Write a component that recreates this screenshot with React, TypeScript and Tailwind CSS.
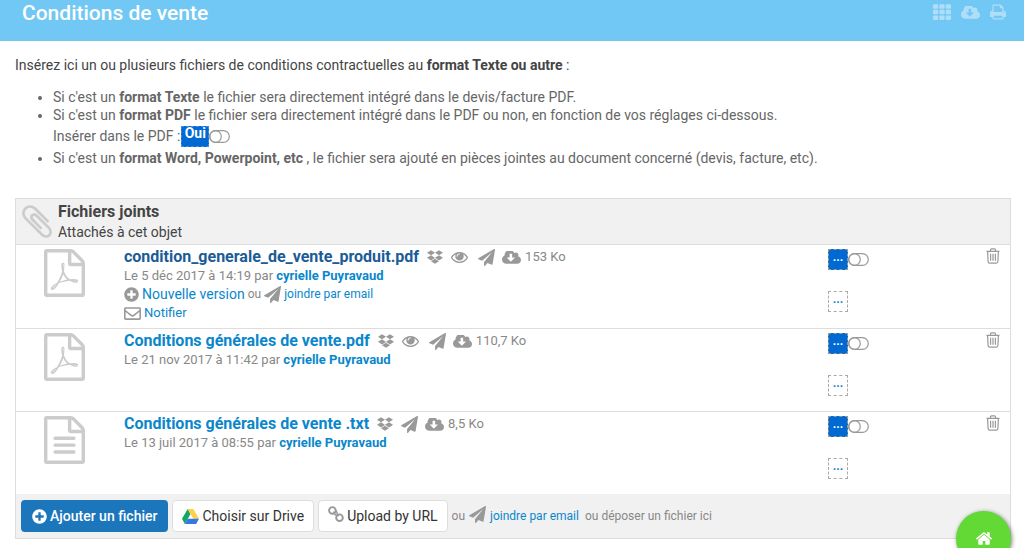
import React, { useState } from 'react';
import { FaDropbox, FaPlusCircle, FaRegEnvelope, FaTh } from 'react-icons/fa';

interface IconProps {
  className?: string;
}

interface JoinedFile {
  id: number;
  name: string;
  type: 'pdf' | 'txt';
  date: string;
  author: string;
  size: string;
  visited?: boolean;
  versions?: boolean;
}

const files: JoinedFile[] = [
  {
    id: 1,
    name: 'condition_generale_de_vente_produit.pdf',
    type: 'pdf',
    date: '5 déc 2017 à 14:19',
    author: 'cyrielle Puyravaud',
    size: '153 Ko',
    visited: true,
    versions: true,
  },
  {
    id: 2,
    name: 'Conditions générales de vente.pdf',
    type: 'pdf',
    date: '21 nov 2017 à 11:42',
    author: 'cyrielle Puyravaud',
    size: '110,7 Ko',
  },
  {
    id: 3,
    name: 'Conditions générales de vente .txt',
    type: 'txt',
    date: '13 juil 2017 à 08:55',
    author: 'cyrielle Puyravaud',
    size: '8,5 Ko',
  },
];

function PaperclipIcon({ className }: IconProps) {
  return (
    <svg viewBox="196 132 1400 1528" fill="currentColor" className={className} aria-hidden="true">
      <path d="M1596 1385q0 117-79 196t-196 79q-135 0-235-100l-777-776q-113-115-113-271 0-159 110-270t269-111q158 0 273 113l605 606q10 10 10 22 0 16-30.5 46.5t-46.5 30.5q-13 0-23-10l-606-607q-79-77-181-77-106 0-179 75t-73 181q0 105 76 181l776 777q63 63 145 63 64 0 106-42t42-106q0-82-63-145l-581-581q-26-24-60-24-29 0-48 19t-19 48q0 32 25 59l410 410q10 10 10 22 0 16-31 47t-47 31q-12 0-22-10l-410-410q-63-61-63-149 0-82 57-139t139-57q88 0 149 63l581 581q100 98 100 235z" />
    </svg>
  );
}

function PrintIcon({ className }: IconProps) {
  return (
    <svg viewBox="64 64 1664 1664" fill="currentColor" className={className} aria-hidden="true">
      <path d="M448 1536h896v-256h-896v256zm0-640h896v-384h-160q-40 0-68-28t-28-68v-160h-640v640zm1152 64q0-26-19-45t-45-19-45 19-19 45 19 45 45 19 45-19 19-45zm128 0v416q0 13-9.5 22.5t-22.5 9.5h-224v160q0 40-28 68t-68 28h-960q-40 0-68-28t-28-68v-160h-224q-13 0-22.5-9.5t-9.5-22.5v-416q0-79 56.5-135.5t135.5-56.5h64v-544q0-40 28-68t68-28h672q40 0 88 20t76 48l152 152q28 28 48 76t20 88v256h64q79 0 135.5 56.5t56.5 135.5z" />
    </svg>
  );
}

function CloudIcon({ className }: IconProps) {
  return (
    <svg viewBox="-64 256 1920 1280" fill="currentColor" className={className} aria-hidden="true">
      <path d="M1216 928q0-14-9-23t-23-9h-224v-352q0-13-9.5-22.5t-22.5-9.5h-192q-13 0-22.5 9.5t-9.5 22.5v352h-224q-13 0-22.5 9.5t-9.5 22.5q0 14 9 23l352 352q9 9 23 9t23-9l351-351q10-12 10-24zm640 224q0 159-112.5 271.5t-271.5 112.5h-1088q-185 0-316.5-131.5t-131.5-316.5q0-130 70-240t188-165q-2-30-2-43 0-212 150-362t362-150q156 0 285.5 87t188.5 231q71-62 166-62 106 0 181 75t75 181q0 76-41 138 130 31 213.5 135.5t83.5 238.5z" />
    </svg>
  );
}

function EyeIcon({ className }: IconProps) {
  return (
    <svg viewBox="0 384 1792 1152" fill="currentColor" className={className} aria-hidden="true">
      <path d="M1664 960q-152-236-381-353 61 104 61 225 0 185-131.5 316.5t-316.5 131.5-316.5-131.5-131.5-316.5q0-121 61-225-229 117-381 353 133 205 333.5 326.5t434.5 121.5 434.5-121.5 333.5-326.5zm-720-384q0-20-14-34t-34-14q-125 0-214.5 89.5t-89.5 214.5q0 20 14 34t34 14 34-14 14-34q0-86 61-147t147-61q20 0 34-14t14-34zm848 384q0 34-20 69-140 230-376.5 368.5t-499.5 138.5-499.5-139-376.5-368q-20-35-20-69t20-69q140-229 376.5-368t499.5-139 499.5 139 376.5 368q20 35 20 69z" />
    </svg>
  );
}

function PlaneIcon({ className }: IconProps) {
  return (
    <svg viewBox="0 0 1792 1792" fill="currentColor" className={className} aria-hidden="true">
      <path d="M1764 11q33 24 27 64l-256 1536q-5 29-32 45-14 8-31 8-11 0-24-5l-453-185-242 295q-18 23-49 23-13 0-22-4-19-7-30.5-23.5t-11.5-36.5v-349l864-1059-1069 925-395-162q-37-14-40-55-2-40 32-59l1664-960q15-9 32-9 20 0 36 11z" />
    </svg>
  );
}

function FileIcon({ type, className }: IconProps & { type: 'pdf' | 'txt' }) {
  return (
    <svg viewBox="128 0 1536 1792" fill="currentColor" className={className} aria-hidden="true">
      <path d="M1596 380q28 28 48 76t20 88v1152q0 40-28 68t-68 28h-1344q-40 0-68-28t-28-68v-1600q0-40 28-68t68-28h896q40 0 88 20t76 48zm-444-244v376h376q-10-29-22-41l-313-313q-12-12-41-22zm384 1528v-1024h-416q-40 0-68-28t-28-68v-416h-768v1536h1280z" />
      {type === 'pdf' ? (
        <path d="M1022 1071q33 26 84 56 59-7 117-7 147 0 177 49 16 22 2 52 0 1-1 2l-2 2v1q-6 38-71 38-48 0-115-20t-130-53q-221 24-392 83-153 262-242 262-15 0-28-7l-24-12q-1-1-6-5-10-10-6-36 9-40 56-91.5t132-96.5q14-9 23 6 2 2 2 4 52-85 107-197 68-136 104-262-24-82-30.5-159.5t6.5-127.5q11-40 42-40h22q23 0 35 15 18 21 9 68-2 6-4 8 1 3 1 8v30q-2 123-14 192 55 164 146 238zm-576 411q52-24 137-158-51 40-87.5 84t-49.5 74zm398-920q-15 42-2 132 1-7 7-44 0-3 7-43 1-4 4-8-1-1-1-2t-1-2q-1-22-13-36 0 1-1 2v2zm-124 661q135-54 284-81-2-1-13-9.5t-16-13.5q-76-67-127-176-27 86-83 197-30 56-45 83zm646-16q-24-24-140-24 76 28 124 28 14 0 18-1 0-1-2-3z" />
      ) : (
        <path d="M544 832h704M544 1088h704M544 1344h704" stroke="currentColor" strokeWidth="128" strokeLinecap="round" />
      )}
    </svg>
  );
}

function HomeIcon({ className }: IconProps) {
  return (
    <svg viewBox="90 253 1612 1283" fill="currentColor" className={className} aria-hidden="true">
      <path d="M1472 992v480q0 26-19 45t-45 19h-384v-384h-256v384h-384q-26 0-45-19t-19-45v-480q0-1 .5-3t.5-3l575-474 575 474q1 2 1 6zm223-69l-62 74q-8 9-21 11h-3q-13 0-21-7l-692-577-692 577q-12 8-24 7-13-2-21-11l-62-74q-8-10-7-23.5t11-21.5l719-599q32-26 76-26t76 26l244 204v-195q0-14 9-23t23-9h192q14 0 23 9t9 23v408l219 182q10 8 11 21.5t-7 23.5z" />
    </svg>
  );
}

function TrashIcon({ className }: IconProps) {
  return (
    <svg viewBox="0 0 14 16" fill="none" stroke="currentColor" strokeWidth="1.2" className={className} aria-hidden="true">
      <path d="M.5 3.4h13M4.5 3.2V1.8q0-1 1-1h3q1 0 1 1v1.4M1.6 3.6l.5 9.9q.1 1.6 1.6 1.6h6.600q1.5 0 1.600-1.600l.5-9.900" />
      <path d="M4.6 5.800v7M7 5.800v7M9.400 5.800v7" />
    </svg>
  );
}

function ChainIcon({ className }: IconProps) {
  return (
    <svg viewBox="0 0 16 16" fill="none" stroke="currentColor" strokeWidth="1.9" className={className} aria-hidden="true">
      <circle cx="4.4" cy="4.4" r="3.3" />
      <circle cx="11.5" cy="11.7" r="3.3" />
      <path d="M5.4 5.6l1.7 3q1 1.2 2.3.6M7.5 4.6q2 1.4 1.7 3.2l1.5 2.4" strokeWidth="1.5" />
    </svg>
  );
}

function DriveIcon({ className }: IconProps) {
  return (
    <svg viewBox="0 0 87 76" className={className} aria-hidden="true">
      <path fill="#11a861" d="M29 0 0 50l14.5 26L43.5 25z" />
      <path fill="#ffcf48" d="M29 0h29l29 50H58z" />
      <path fill="#3777e3" d="M29 50h58L72.5 76h-58z" />
    </svg>
  );
}

function Switch({ label }: { label: string }) {
  const [on, setOn] = useState(false);

  return (
    <button
      type="button"
      role="switch"
      aria-checked={on}
      aria-label={label}
      onClick={() => setOn(!on)}
      className="text-[#999]"
    >
      <svg viewBox="0 0 21 13" fill="none" stroke="currentColor" strokeWidth="1.2" className="w-[21px] h-[13px]">
        <rect x=".7" y=".7" width="19.6" height="11.6" rx="5.8" />
        <circle cx={on ? 14.5 : 6.5} cy="6.5" r="5.8" />
      </svg>
    </button>
  );
}

function FileRow({ file }: { file: JoinedFile }) {
  return (
    <li className="flex min-h-[83px] border-t border-[#ddd] first:border-t-0 text-[13px] leading-[18px] text-[#888]">
      <div className="w-[108px] shrink-0 pl-7 pt-1">
        <FileIcon type={file.type} className="w-[41px] h-[48px] text-[#ccc]" />
      </div>

      <div className="flex-1 min-w-0 pt-[2px]">
        <div className="flex items-center h-5">
          <a
            href="#"
            className={`text-base leading-5 font-bold mr-2 ${file.visited ? 'text-[#1b5c97]' : 'text-[#0a87cc]'}`}
          >
            {file.name}
          </a>
          <FaDropbox className="w-4 h-4 text-[#999]" />
          {file.type === 'pdf' && <EyeIcon className="w-[17px] h-[11px] ml-2 text-[#999]" />}
          <PlaneIcon className={`w-[17px] h-[17px] text-[#999] ${file.type === 'pdf' ? 'ml-[10px]' : 'ml-2'}`} />
          <CloudIcon className="w-[19px] h-[13px] ml-[7px] mr-1 text-[#999]" />
          <span>{file.size}</span>
        </div>
        <p>
          Le {file.date} par{' '}
          <a href="#" className="font-bold text-[#0a87cc]">{file.author}</a>
        </p>
        {file.versions && (
          <>
            <div className="flex items-center gap-[3px] text-xs leading-[18px]">
              <FaPlusCircle className="w-[15px] h-[15px] text-[#999]" />
              <a href="#" className="text-sm leading-[18px] text-[#0a87cc]">Nouvelle version</a>
              <span>ou</span>
              <PlaneIcon className="w-[17px] h-[17px] text-[#999]" />
              <a href="#" className="text-[#0a87cc]">joindre par email</a>
            </div>
            <div className="flex items-center gap-[3px] pt-px">
              <FaRegEnvelope className="w-[17px] h-[17px] text-[#999]" />
              <a href="#" className="text-[#0a87cc]">Notifier</a>
            </div>
          </>
        )}
      </div>

      <div className="w-[158px] shrink-0 pt-[4px]">
        <div className="flex items-center">
          <button
            type="button"
            className="w-5 h-[21px] pb-[6px] border border-dashed border-[#999] bg-[#0069d2] text-white text-xs font-bold leading-3"
          >
            ...
          </button>
          <Switch label={`Insérer ${file.name} dans le PDF`} />
        </div>
        <button
          type="button"
          className="block w-5 h-[21px] pb-[6px] mt-[21px] border border-dashed border-[#aaa] text-[#0a87cc] text-xs font-bold leading-3"
        >
          ...
        </button>
      </div>

      <div className="shrink-0 pt-[3px] pr-[10px]">
        <button type="button" aria-label={`Supprimer ${file.name}`} className="block text-[#999]">
          <TrashIcon className="w-[14px] h-4" />
        </button>
      </div>
    </li>
  );
}

function App() {
  return (
    <div className="bg-white font-[Roboto,sans-serif] text-sm text-[#444]">
      {/* Title bar */}
      <header className="flex justify-between h-[41px] bg-[#72c8f4] pl-[22px] pr-[18px]">
        <h1 className="text-[21px] leading-[26px] font-medium text-white">Conditions de vente</h1>
        <div className="flex items-center gap-[10px] h-6 text-[#b0def8]">
          <button type="button" aria-label="Grille"><FaTh className="w-[18px] h-[18px]" /></button>
          <button type="button" aria-label="Télécharger"><CloudIcon className="w-[19px] h-[13px]" /></button>
          <button type="button" aria-label="Imprimer"><PrintIcon className="w-4 h-4" /></button>
        </div>
      </header>

      {/* Instructions */}
      <section className="pl-[15px] pr-[13px] pt-[15px] leading-[18px]">
        <p>
          Insérez ici un ou plusieurs fichiers de conditions contractuelles au{' '}
          <b>format Texte ou autre</b> :
        </p>
        <ul className="list-disc pl-[38px] pt-[14px] text-[#666]">
          <li>
            Si c'est un <b>format Texte</b> le fichier sera directement intégré dans le devis/facture PDF.
          </li>
          <li>
            Si c'est un <b>format PDF</b> le fichier sera directement intégré dans le PDF ou non, en fonction de
            vos réglages ci-dessous.
            <div className="flex items-center h-6">
              <span className="mr-px">Insérer dans le PDF :</span>
              <button
                type="button"
                className="w-7 h-[21px] border border-dashed border-[#3f8fdc] bg-[#0069d2] text-white text-sm leading-3 font-bold pb-[6px]"
              >
                Oui
              </button>
              <Switch label="Insérer dans le PDF" />
            </div>
          </li>
          <li className="pt-px">
            Si c'est un <b>format Word, Powerpoint, etc</b> , le fichier sera ajouté en pièces jointes au document
            concerné (devis, facture, etc).
          </li>
        </ul>
      </section>

      {/* Joined files */}
      <section className="ml-[15px] mr-[13px] mt-[31px] mb-[10px] border border-[#ddd]">
        <div className="flex items-center gap-[6px] h-[46px] pl-[6px] bg-[#f1f1f1] border-b border-[#ddd]">
          <PaperclipIcon className="w-[30px] h-[33px] text-[#ccc]" />
          <div>
            <h2 className="text-base leading-5 font-bold">Fichiers joints</h2>
            <p className="leading-5">Attachés à cet objet</p>
          </div>
        </div>

        <ul>
          {files.map((file) => (
            <FileRow key={file.id} file={file} />
          ))}
        </ul>

        <div className="flex flex-wrap items-center gap-1 min-h-[44px] px-[5px] bg-[#f1f1f1] text-xs text-[#888]">
          <button
            type="button"
            className="flex items-center gap-[3px] h-8 px-[11px] rounded bg-[#1c76bb] text-sm font-medium text-white"
          >
            <FaPlusCircle className="w-[15px] h-[15px]" />
            Ajouter un fichier
          </button>
          <button
            type="button"
            className="flex items-center gap-[3px] h-8 px-[9px] rounded border border-[#ddd] bg-white text-sm text-[#333]"
          >
            <DriveIcon className="w-[17px] h-[15px]" />
            Choisir sur Drive
          </button>
          <button
            type="button"
            className="flex items-center gap-[3px] h-8 px-[9px] rounded border border-[#ddd] bg-white text-sm text-[#333]"
          >
            <ChainIcon className="w-4 h-4 mb-1 text-[#999]" />
            Upload by URL
          </button>
          <span>ou</span>
          <PlaneIcon className="w-[17px] h-[17px] mb-1 text-[#999]" />
          <a href="#" className="text-[#0a87cc]">joindre par email</a>
          <span className="ml-[2px]">ou déposer un fichier ici</span>
        </div>
      </section>

      <a
        href="#"
        aria-label="Accueil"
        className="fixed right-[13px] -bottom-[18px] flex items-center justify-center w-[55px] h-[55px] rounded-full bg-[#62d935] text-white shadow-[1px_1px_4px_rgba(0,0,0,0.5)]"
      >
        <HomeIcon className="w-4 h-[13px]" />
      </a>
    </div>
  );
}

export default App;
